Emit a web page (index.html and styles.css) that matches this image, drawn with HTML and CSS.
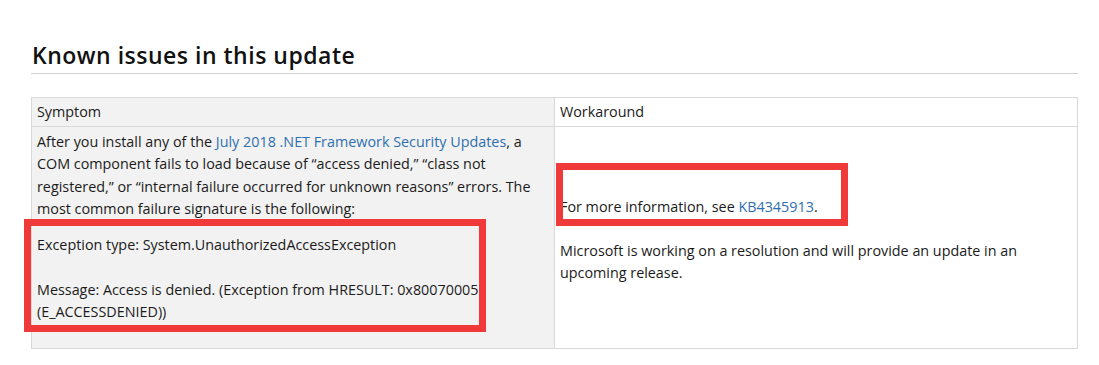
FILE: index.html
```html
<!DOCTYPE html>
<html lang="en">
<head>
<meta charset="utf-8">
<title>Known issues in this update</title>
<link rel="stylesheet" href="styles.css">
</head>
<body>
<div class="page">
  <h2 class="section-title">Known issues in this update</h2>
  <table class="issues">
    <thead>
      <tr>
        <th class="col-symptom">Symptom</th>
        <th class="col-workaround">Workaround</th>
      </tr>
    </thead>
    <tbody>
      <tr>
        <td class="col-symptom">
          <p class="p-first">After you install any of the <a href="#">July 2018 .NET Framework Security Updates</a>, a COM component fails to load because of “access denied,” “class not registered,” or “internal failure occurred for unknown reasons” errors. The most common failure signature is the following:</p>
          <p class="p-next">Exception type: System.UnauthorizedAccessException<br><br>Message: Access is denied. (Exception from HRESULT: 0x80070005 (E_ACCESSDENIED))</p>
        </td>
        <td class="col-workaround">
          <p class="p-info">For more information, see <a href="#">KB4345913</a>.</p>
          <p class="p-status">Microsoft is working on a resolution and will provide an update in an upcoming release.</p>
        </td>
      </tr>
    </tbody>
  </table>
  <div class="mark mark-left"></div>
  <div class="mark mark-right"></div>
</div>
</body>
</html>
```

FILE: styles.css
```css
html, body {
  margin: 0;
  padding: 0;
  background: #ffffff;
}

.page {
  position: relative;
  padding: 40px 21px 0 31px;
  font-family: "Open Sans", "Noto Sans", sans-serif;
  color: #1b1b1b;
}

.section-title {
  margin: 0 0 23px 0;
  padding: 0 0 3px 1px;
  font-size: 23px;
  font-weight: 600;
  letter-spacing: 0.5px;
  line-height: 30px;
  color: #111111;
  border-bottom: 1px solid #d2d2d2;
}

.issues {
  width: 1047px;
  border-collapse: collapse;
  table-layout: fixed;
  font-size: 14.35px;
  line-height: 22.5px;
}

.issues th,
.issues td {
  border: 1px solid #d9d9d9;
  text-align: left;
  font-weight: 400;
  vertical-align: top;
}

.issues th {
  padding: 3px 5px 2px 5px;
}

.issues td {
  padding: 4px 5px 24px 5px;
}

.col-symptom {
  background: #f2f2f2;
}

.col-workaround {
  background: #ffffff;
}

.issues p {
  margin: 0;
}

.issues .p-next {
  margin-top: 13px;
}

.issues .p-info {
  margin-top: 65px;
}

.issues .p-status {
  margin-top: 21.5px;
}

.issues a {
  color: #2f6fb0;
  text-decoration: none;
}

.mark {
  position: absolute;
  border: 7px solid #f03a3a;
  box-sizing: border-box;
}

.mark-left {
  left: 24px;
  top: 219px;
  width: 462px;
  height: 113px;
}

.mark-right {
  left: 556px;
  top: 163px;
  width: 292px;
  height: 63px;
}
```
